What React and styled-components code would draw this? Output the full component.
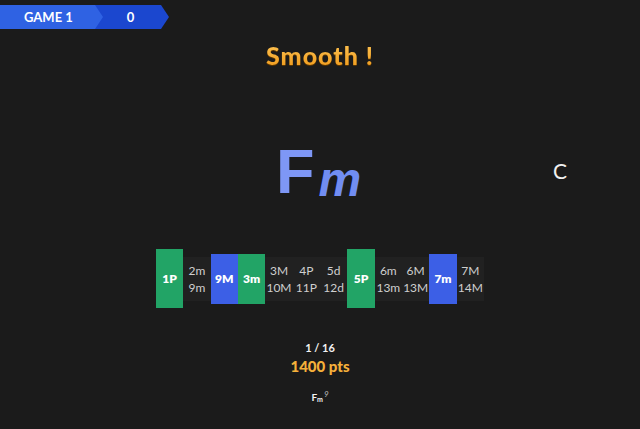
import React from 'react';
import styled, { createGlobalStyle } from 'styled-components';

const Global = createGlobalStyle`
  html, body { margin: 0; padding: 0; background: #1b1b1b; }
  body {
    width: 640px; height: 429px; overflow: hidden;
    font-family: Lato, "Noto Sans", sans-serif; color: #eee;
  }
`;

const Page = styled.div`
  width: 640px;
  height: 429px;
  display: flex;
  flex-direction: column;
  background: #1b1b1b;
`;

const Banner = styled.div`
  display: flex;
  margin-top: 5px;
  height: 24px;
`;

const GameTag = styled.div`
  position: relative;
  z-index: 1;
  width: 103px;
  height: 24px;
  box-sizing: border-box;
  padding-left: 24px;
  display: flex;
  align-items: center;
  background: #2f62e3;
  clip-path: polygon(0 0, 95px 0, 103px 12px, 95px 24px, 0 24px);
  font-weight: 700;
  font-size: 13px;
  color: #fff;
`;

const ScoreTag = styled.div`
  margin-left: -11px;
  width: 77px;
  height: 24px;
  display: flex;
  align-items: center;
  justify-content: center;
  background: #1b47cf;
  clip-path: polygon(0 0, 69px 0, 77px 12px, 69px 24px, 0 24px);
  font-weight: 700;
  font-size: 13px;
  color: #fff;
`;

const Title = styled.h1`
  margin: 11px 0 0;
  text-align: center;
  font-family: Lato, sans-serif;
  font-weight: 900;
  font-size: 25px;
  line-height: 30px;
  letter-spacing: 1px;
  background: linear-gradient(#ffc85a, #ee9818);
  -webkit-background-clip: text;
  background-clip: text;
  color: transparent;
  filter: drop-shadow(0 1px 0 #5a3500);
`;

const ChordRow = styled.div`
  margin-top: 70px;
  display: grid;
  grid-template-columns: 1fr auto 1fr;
  height: 63px;
`;

const Chord = styled.div`
  grid-column: 2;
  margin-right: 3px;
  font-family: "Liberation Sans", Arial, sans-serif;
  font-weight: 700;
  line-height: 63px;
  white-space: nowrap;
`;

const Root = styled.span`
  font-size: 63px;
  color: #7e97f5;
`;

const Quality = styled.span`
  font-size: 48px;
  font-style: italic;
  color: #718df2;
  margin-left: 4px;
  vertical-align: -3px;
`;

const NextNote = styled.div`
  grid-column: 3;
  justify-self: start;
  align-self: start;
  margin-top: 19px;
  margin-left: 189px;
  font-size: 21px;
  font-weight: 400;
  color: #f0f0f0;
  line-height: 24px;
`;

const Keyboard = styled.div`
  margin: 46px auto 0;
  width: 328px;
  height: 59px;
  display: grid;
  grid-template-columns: repeat(12, 1fr);
  align-items: center;
`;

const colors = {
  green: '#22a466',
  blue: '#3c5fe6',
  none: '#212121',
};

const Cell = styled.div`
  height: ${(p) => p.$h}px;
  background: ${(p) => colors[p.$tone]};
  display: flex;
  flex-direction: column;
  align-items: center;
  justify-content: center;
  font-size: 12px;
  line-height: 17px;
  color: ${(p) => (p.$tone === 'none' ? '#cfcfcf' : '#fff')};
  font-weight: ${(p) => (p.$tone === 'none' ? 400 : 800)};
`;

const Counter = styled.div`
  margin-top: 33px;
  text-align: center;
  font-size: 11px;
  line-height: 14px;
  font-weight: 700;
  color: #f2f2f2;
`;

const Points = styled.div`
  margin-top: 2px;
  text-align: center;
  font-size: 15px;
  line-height: 18px;
  font-weight: 900;
  color: #f5b03a;
`;

const SmallChord = styled.div`
  margin-top: 12px;
  text-align: center;
  font-size: 10px;
  line-height: 14px;
  font-weight: 700;
  color: #f2f2f2;
`;

const Sub = styled.span`
  font-size: 7px;
  vertical-align: -1px;
`;

const Sup = styled.span`
  font-size: 8px;
  font-style: italic;
  font-weight: 400;
  color: #bbb;
  vertical-align: 4px;
  margin-left: 1px;
`;

const cells = [
  { label: ['1P'], tone: 'green', h: 59 },
  { label: ['2m', '9m'], tone: 'none', h: 44 },
  { label: ['9M'], tone: 'blue', h: 50 },
  { label: ['3m'], tone: 'green', h: 50 },
  { label: ['3M', '10M'], tone: 'none', h: 44 },
  { label: ['4P', '11P'], tone: 'none', h: 44 },
  { label: ['5d', '12d'], tone: 'none', h: 44 },
  { label: ['5P'], tone: 'green', h: 59 },
  { label: ['6m', '13m'], tone: 'none', h: 44 },
  { label: ['6M', '13M'], tone: 'none', h: 44 },
  { label: ['7m'], tone: 'blue', h: 50 },
  { label: ['7M', '14M'], tone: 'none', h: 44 },
];

export default function App() {
  return (
    <Page>
      <Global />
      <Banner>
        <GameTag>GAME 1</GameTag>
        <ScoreTag>0</ScoreTag>
      </Banner>
      <Title>Smooth !</Title>
      <ChordRow>
        <Chord>
          <Root>F</Root>
          <Quality>m</Quality>
        </Chord>
        <NextNote>C</NextNote>
      </ChordRow>
      <Keyboard>
        {cells.map((c) => (
          <Cell key={c.label[0]} $tone={c.tone} $h={c.h}>
            {c.label.map((l) => (
              <span key={l}>{l}</span>
            ))}
          </Cell>
        ))}
      </Keyboard>
      <Counter>1 / 16</Counter>
      <Points>1400 pts</Points>
      <SmallChord>
        F<Sub>m</Sub>
        <Sup>9</Sup>
      </SmallChord>
    </Page>
  );
}
